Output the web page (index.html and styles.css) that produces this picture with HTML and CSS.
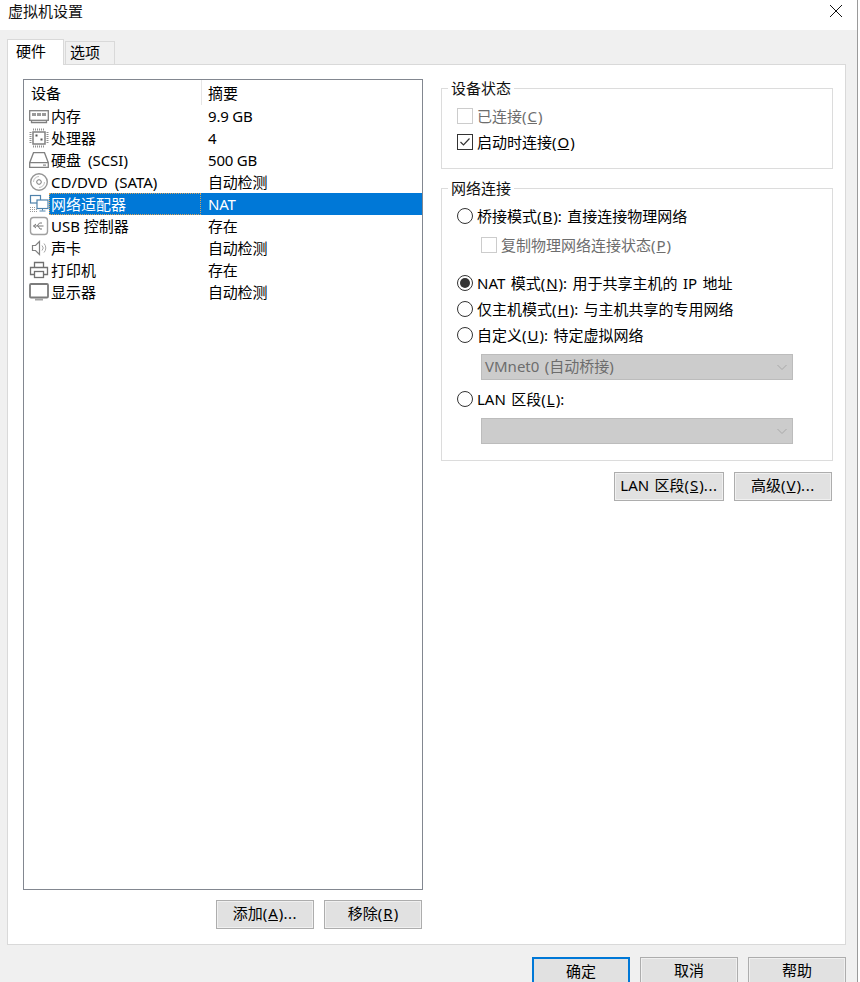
FILE: index.html
```html
<!DOCTYPE html>
<html lang="zh-CN">
<head>
<meta charset="utf-8">
<title>虚拟机设置</title>
<link rel="stylesheet" href="styles.css">
</head>
<body>
<div class="window">
  <header class="titlebar">
    <span class="title">虚拟机设置</span>
    <svg class="close" width="14" height="14" viewBox="0 0 14 14"><path d="M1 1 13 13M13 1 1 13" stroke="#111" stroke-width="1" fill="none"/></svg>
  </header>
  <div class="body">
    <nav class="tabs">
      <span class="tab active">硬件</span>
      <span class="tab">选项</span>
    </nav>
    <main class="panel">
      <section class="left">
        <div class="list">
          <div class="list-head">
            <span class="head-name">设备</span>
            <span class="head-value">摘要</span>
          </div>
          <div class="row">
            <svg class="ico" viewBox="0 0 20 20"><g fill="none" stroke="#808080" stroke-width="1.300"><rect x="0.700" y="4.700" width="18.600" height="9.600"/><path d="M2.500 14.500v2h15v-2"/></g><g fill="#9a9a9a"><rect x="3" y="7" width="4" height="3"/><rect x="8" y="7" width="4" height="3"/><rect x="13" y="7" width="4" height="3"/></g></svg>
            <span class="name">内存</span><span class="value">9.9 GB</span>
          </div>
          <div class="row">
            <svg class="ico" viewBox="0 0 20 20"><rect x="4" y="4" width="12" height="12" fill="none" stroke="#808080" stroke-width="1.500"/><path d="M4.500 0.500v2M6.500 0.500v2M8.500 0.500v2M10.500 0.500v2M12.500 0.500v2M14.500 0.500v2M4.500 17.500v2M6.500 17.500v2M8.500 17.500v2M10.500 17.500v2M12.500 17.500v2M14.500 17.500v2M0.500 4.500h2M0.500 6.500h2M0.500 8.500h2M0.500 10.500h2M0.500 12.500h2M0.500 14.500h2M17.500 4.500h2M17.500 6.500h2M17.500 8.500h2M17.500 10.500h2M17.500 12.500h2M17.500 14.500h2" stroke="#909090" fill="none"/><rect x="6.500" y="6.500" width="2" height="2" fill="#555"/><rect x="11.500" y="10.500" width="2" height="2" fill="#555"/></svg>
            <span class="name">处理器</span><span class="value">4</span>
          </div>
          <div class="row">
            <svg class="ico" viewBox="0 0 20 20"><path d="M4.500 2.700h11l3.800 10v4.600h-18.600v-4.600z M1 12.700h18" fill="none" stroke="#808080" stroke-width="1.300"/><rect x="14" y="14.500" width="3" height="1.200" fill="#888"/></svg>
            <span class="name wide">硬盘 (SCSI)</span><span class="value">500 GB</span>
          </div>
          <div class="row">
            <svg class="ico" viewBox="0 0 20 20"><circle cx="10" cy="10" r="8.300" fill="none" stroke="#959595" stroke-width="1.400"/><circle cx="10" cy="10" r="2.300" fill="none" stroke="#777"/><path d="M4.500 10a5.500 5.500 0 0 1 5.500-5.500M15.500 10a5.500 5.500 0 0 1-5.500 5.500" fill="none" stroke="#c0c0c0"/></svg>
            <span class="name wide">CD/DVD (SATA)</span><span class="value">自动检测</span>
          </div>
          <div class="row selected">
            <svg class="ico" viewBox="0 0 20 20"><g fill="#fff" stroke="#4f82ab" stroke-width="1.200"><rect x="1.500" y="1.500" width="10" height="7.500"/><rect x="8" y="6" width="11" height="8.500"/></g><path d="M13.500 14.500v2M10.500 17h6" stroke="#4f82ab"/><path d="M1 13.500h6M1 15.500h7M1 17.500h7" stroke="#9a9a9a" stroke-dasharray="1 1"/></svg>
            <span class="name focus">网络适配器</span><span class="value">NAT</span>
          </div>
          <div class="row">
            <svg class="ico" viewBox="0 0 20 20"><rect x="1.500" y="1.500" width="17" height="17" rx="3" fill="none" stroke="#a0a0a0" stroke-width="1.400"/><path d="M4.500 10h10M4.500 10l2.500-2M4.500 10l2.500 2M8 10l2.500-3h2.500M9 10l2 3h2" fill="none" stroke="#777"/></svg>
            <span class="name">USB 控制器</span><span class="value">存在</span>
          </div>
          <div class="row">
            <svg class="ico" viewBox="0 0 20 20"><path d="M3.500 7.500h3l4-4v13l-4-4h-3z" fill="none" stroke="#808080" stroke-width="1.200"/><path d="M13 7.500a3.500 3.500 0 0 1 0 5M15 5.500a6.500 6.500 0 0 1 0 9" fill="none" stroke="#a5a5a5"/></svg>
            <span class="name">声卡</span><span class="value">自动检测</span>
          </div>
          <div class="row">
            <svg class="ico" viewBox="0 0 20 20"><path d="M5.500 7V2.500h9V7M5 14.500H1.500v-7h17v7H15" fill="none" stroke="#707070" stroke-width="1.300"/><rect x="5.500" y="11.500" width="9" height="6" fill="none" stroke="#707070" stroke-width="1.300"/></svg>
            <span class="name">打印机</span><span class="value">存在</span>
          </div>
          <div class="row">
            <svg class="ico" viewBox="0 0 20 20"><rect x="1" y="2" width="18" height="13.500" rx="1" fill="none" stroke="#7c7c7c" stroke-width="1.800"/><path d="M6 17.500h8" stroke="#a5a5a5" stroke-width="2"/></svg>
            <span class="name">显示器</span><span class="value">自动检测</span>
          </div>
        </div>
        <div class="btn-row list-btns">
          <button class="btn">添加(<u>A</u>)<span class="dots">...</span></button>
          <button class="btn">移除(<u>R</u>)</button>
        </div>
      </section>
      <section class="right">
        <fieldset class="group status">
          <legend>设备状态</legend>
          <div class="opt disabled"><span class="check"></span><span class="lbl">已连接(<u>C</u>)</span></div>
          <div class="opt"><span class="check on"><svg width="14" height="14" viewBox="0 0 14 14"><path d="M2.500 7l3 3 6-6.500" fill="none" stroke="#333" stroke-width="1.200"/></svg></span><span class="lbl">启动时连接(<u>O</u>)</span></div>
        </fieldset>
        <fieldset class="group network">
          <legend>网络连接</legend>
          <div class="opt"><span class="radio"></span><span class="lbl">桥接模式(<u>B</u>): 直接连接物理网络</span></div>
          <div class="opt sub disabled"><span class="check"></span><span class="lbl">复制物理网络连接状态(<u>P</u>)</span></div>
          <div class="opt nat"><span class="radio on"></span><span class="lbl">NAT 模式(<u>N</u>): 用于共享主机的 IP 地址</span></div>
          <div class="opt"><span class="radio"></span><span class="lbl">仅主机模式(<u>H</u>): 与主机共享的专用网络</span></div>
          <div class="opt"><span class="radio"></span><span class="lbl">自定义(<u>U</u>): 特定虚拟网络</span></div>
          <div class="select"><span class="lbl">VMnet0 (自动桥接)</span><svg width="10" height="7" viewBox="0 0 10 7"><path d="M0.500 1l4.500 4.500 4.500-4.500" fill="none" stroke="#a8a8a8"/></svg></div>
          <div class="opt lan"><span class="radio"></span><span class="lbl">LAN 区段(<u>L</u>):</span></div>
          <div class="select"><span></span><svg width="10" height="7" viewBox="0 0 10 7"><path d="M0.500 1l4.500 4.500 4.500-4.500" fill="none" stroke="#a8a8a8"/></svg></div>
        </fieldset>
        <div class="btn-row net-btns">
          <button class="btn lan-btn">LAN 区段(<u>S</u>)<span class="dots">...</span></button>
          <button class="btn">高级(<u>V</u>)<span class="dots">...</span></button>
        </div>
      </section>
    </main>
    <footer class="btn-row footer">
      <button class="btn primary">确定</button>
      <button class="btn">取消</button>
      <button class="btn">帮助</button>
    </footer>
  </div>
</div>
</body>
</html>
```
FILE: styles.css
```css
* { box-sizing: border-box; }
html, body { margin: 0; padding: 0; height: 982px; overflow: hidden; background: #fff; }
body, button {
  font-family: "Noto Sans", "Noto Sans CJK SC", sans-serif;
  font-size: 15px;
  color: #000;
}
u { margin: 0 1px; }
.window {
  width: 858px;
  height: 982px;
  border-right: 1px solid #9a9a9a;
  display: flex;
  flex-direction: column;
  overflow: hidden;
}
.titlebar {
  height: 30px;
  flex: none;
  background: #fff;
  display: flex;
  align-items: center;
  justify-content: space-between;
  padding: 0 14px 0 8px;
  line-height: 22px;
}
.title { margin-top: -8px; color: #111; }
.close { margin-top: -8px; }
.body { flex: 1; background: #f0f0f0; display: flex; flex-direction: column; min-height: 0; }
.tabs { display: flex; align-items: flex-end; height: 34px; padding-left: 7px; flex: none; }
.tab {
  height: 23px;
  width: 50px;
  margin-left: 1px;
  padding-left: 4px;
  border: 1px solid #d9d9d9;
  border-bottom: 0;
  background: #f0f0f0;
  line-height: 21px;
}
.tab.active {
  width: 57px;
  height: 26px;
  margin: 0 0 -1px;
  padding-left: 8px;
  background: #fff;
  z-index: 1;
  line-height: 22px;
}
.panel {
  flex: none;
  width: 839px;
  height: 881px;
  margin-left: 7px;
  background: #fff;
  border: 1px solid #d9d9d9;
  padding: 13px 0 0 15px;
  display: flex;
}
.left { width: 400px; flex: none; padding-top: 1px; }
.list { height: 811px; border: 1px solid #828790; background: #fff; }
.list-head { display: flex; height: 25px; line-height: 27px; }
.head-name { width: 178px; padding-left: 7px; border-right: 1px solid #e5e5e5; height: 25px; }
.head-value { padding-left: 6px; }
.row { display: flex; align-items: center; height: 22px; line-height: 22px; }
.ico { width: 20px; height: 20px; margin-left: 5px; flex: none; }
.name { width: 152px; padding-left: 2px; flex: none; white-space: nowrap; height: 22px; }
.wide { word-spacing: 3px; }
.value { flex: 1; padding-left: 7px; height: 22px; letter-spacing: -0.2px; }
.selected .name, .selected .value { background: #0078d7; color: #fff; }
.focus { outline: 1px dotted #d9a35b; outline-offset: -1px; }
.btn-row { display: flex; justify-content: flex-end; gap: 10px; }
.list-btns { margin-top: 10px; padding-right: 1px; }
.btn {
  width: 98px;
  height: 29px;
  padding: 0 0 2px;
  background: #e1e1e1;
  border: 1px solid #adadad;
  box-shadow: 0 0 0 1px #f0f0f0 inset;
  line-height: 25px;
  white-space: nowrap;
  word-spacing: 1.500px;
}
.dots { letter-spacing: 0.600px; }
.btn.primary { border: 2px solid #0078d7; box-shadow: none; }
.footer .btn { padding-bottom: 4px; }
.lan-btn { width: 110px; }
.right { width: 392px; flex: none; margin-left: 18px; }
.group {
  margin: 0;
  border: 1px solid #dcdcdc;
  padding: 5px 0 13px 15px;
  min-width: 0;
}
.group legend { padding: 0 3px; margin-left: -9px; line-height: 20px; height: 20px; color: #111; }
.network { margin-top: 9px; padding-bottom: 16px; }
.opt { display: flex; align-items: center; height: 26px; gap: 4px; white-space: nowrap; }
.lbl { margin-top: -2px; word-spacing: 1.500px; }
.disabled { color: #6d6d6d; }
.check {
  width: 16px;
  height: 16px;
  flex: none;
  border: 1px solid #333;
  background: #fff;
  display: flex;
  align-items: center;
  justify-content: center;
}
.disabled .check { border-color: #cccccc; }
.radio {
  width: 16px;
  height: 16px;
  flex: none;
  border: 1px solid #333;
  border-radius: 50%;
  background: #fff;
  display: flex;
  align-items: center;
  justify-content: center;
}
.radio.on::after { content: ""; width: 10px; height: 10px; border-radius: 50%; background: #333; }
.sub { margin: 3px 0 0 24px; }
.nat { margin-top: 12px; }
.lan { margin-top: 6px; }
.select {
  width: 312px;
  height: 26px;
  margin: 6px 0 0 24px;
  background: #cccccc;
  border: 1px solid #bcbcbc;
  color: #6d6d6d;
  display: flex;
  align-items: center;
  justify-content: space-between;
  padding: 0 5px 0 3px;
  line-height: 24px;
}
.net-btns { margin-top: 11px; padding-right: 1px; }
.footer { margin-top: 12px; padding-right: 11px; flex: none; }
```
